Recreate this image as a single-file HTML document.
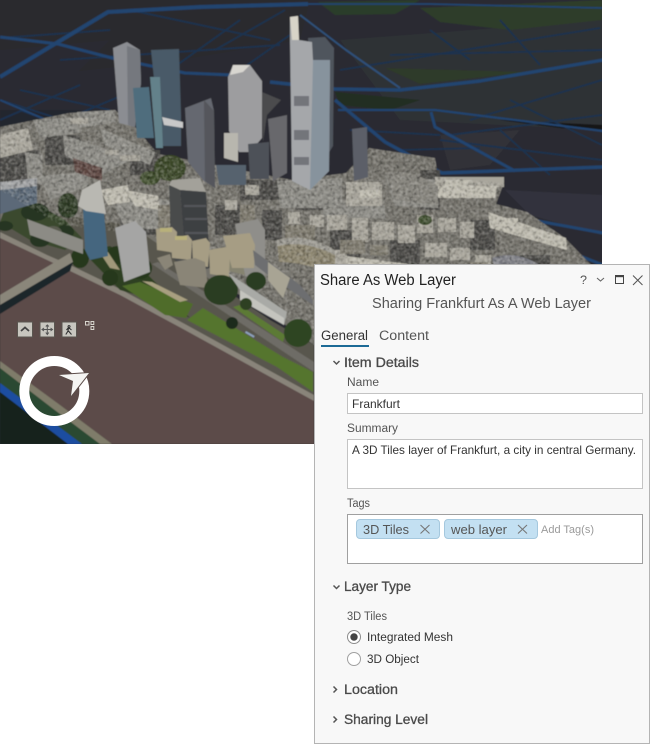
<!DOCTYPE html>
<html><head><meta charset="utf-8"><style>
html,body{margin:0;padding:0;background:#fff}
svg{display:block}
text{font-family:"Liberation Sans",sans-serif}
</style></head><body>
<svg width="650" height="744" viewBox="0 0 650 744" xmlns="http://www.w3.org/2000/svg">
<defs>
<clipPath id="c"><rect width="602" height="444"/></clipPath>
<filter id="b" x="-2%" y="-2%" width="104%" height="104%"><feGaussianBlur stdDeviation=".5"/></filter>
<filter id="n" x="0" y="0" width="100%" height="100%"><feTurbulence type="fractalNoise" baseFrequency=".3" numOctaves="2" seed="7"/><feColorMatrix type="matrix" values="0 0 0 0 0 0 0 0 0 0 0 0 0 0 0 .9 0 0 0 -.36" result="k"/><feTurbulence type="fractalNoise" baseFrequency=".34" numOctaves="2" seed="19"/><feColorMatrix type="matrix" values="0 0 0 0 .95 0 0 0 0 .93 0 0 0 0 .88 .7 0 0 0 -.3" result="w"/><feMerge result="t"><feMergeNode in="k"/><feMergeNode in="w"/></feMerge><feComposite in="t" in2="SourceAlpha" operator="in"/></filter>
</defs>
<g clip-path="url(#c)">
<g filter="url(#b)">
<rect x="-5" y="-5" width="612" height="454" fill="#2b2c32"/>
<polygon points="0,0 310,0 300,40 180,60 0,80" fill="#2c2b2e"/>
<polygon points="0,50 110,40 60,90 0,100" fill="#2a2a30"/>
<polygon points="340,40 602,20 602,130 400,120" fill="#2e3035"/>
<polygon points="318,2 420,0 395,14 335,15" fill="#2a3d2a"/>
<polygon points="420,8 602,0 602,20 510,30 440,22" fill="#2d3c2c"/>
<polygon points="385,68 530,72 420,84" fill="#2e3a2a"/>
<polygon points="335,92 420,100 390,110 340,105" fill="#222f20"/>
<polygon points="500,120 602,125 602,130 560,128" fill="#141614"/>
<polygon points="505,190 602,195 602,235 530,215" fill="#33333c"/>
<polygon points="440,135 520,130 490,165 450,170" fill="#303037"/>
<polygon points="0,110 100,110 100,130 0,170" fill="#24272f"/>
<g fill="none" stroke="#1e3350" stroke-width="1.800">
<path d="M0 38L110 30M60 60L280 45M130 10L270 40M20 90L110 110M0 120L80 85M0 100L110 135M40 130L140 88M20 110L60 125"/>
<path d="M170 70L240 20M215 50L285 10M240 70L290 35M340 70L600 28M390 55L602 50M470 60L430 30M540 65L500 20M602 80L470 120M350 130L440 135M450 135L602 115M510 100L602 145M500 130L550 175"/>
<path d="M440 140L602 160M400 150L480 148"/>
</g>
<g fill="none" stroke="#224470" stroke-width="3" stroke-linejoin="round">
<path d="M0 77L58 42L108 12L200 7L308 4" stroke-width="4"/>
<path d="M0 37L58 44L112 58L185 73L232 75"/>
<path d="M270 82L335 89L400 90L480 81L603 60" stroke-width="3.400"/>
<path d="M300 15L346 50L400 88" stroke-width="2" stroke="#2d5078"/>
<path d="M335 100L385 142L442 173L603 167" stroke-width="3.400"/>
<path d="M338 110L435 110L603 131" stroke-width="2.200"/>
<path d="M431 112L435 127L515 171" stroke-width="3"/>
<path d="M527 219L603 233"/>
<path d="M570 252L603 265"/>
<path d="M0 100L70 130" stroke-width="2"/>
<path d="M308 4H430L602 8" stroke-width="1.800"/>
</g>
<polygon points="0,127 69,113 115,110 135,127 158,154 215,165 292,180 346,173 369,148 435,158 438,177 504,183 496,204 527,212 565,238 603,277 603,330 314,345 250,300 130,240 60,225 0,225" fill="#73716a"/>
<polygon points="0,225 60,215 130,225 270,320 314,345 314,400 0,260" fill="#59574d"/>
<polygon points="0,235 47,258 68,268 120,293 183,327 314,400 314,444 105,444 0,368" fill="#5b4c49"/>
<polygon points="0,232 47,255 70,265 120,289 183,323 314,395 314,401 183,329 120,295 68,270 47,260 0,238" fill="#89847a"/>
<polygon points="0,361 60,405 112,444 0,444" fill="#7f7b6a"/>
<polygon points="0,368 52,408 100,444 0,444" fill="#2b4a30"/>
<polygon points="0,383 82,444 0,444" fill="#1d4ea0"/>
<polygon points="0,392 68,444 0,444" fill="#15241a"/>
<polygon points="7,203 30,200 65,220 82,238 65,250 30,240 0,222" fill="#3a4a2e"/>
<g fill="#263520"><ellipse cx="35" cy="212" rx="14" ry="9"/><ellipse cx="40" cy="240" rx="10" ry="7"/><ellipse cx="65" cy="232" rx="9" ry="7"/><ellipse cx="5" cy="226" rx="8" ry="5"/><ellipse cx="68" cy="208" rx="10" ry="10"/></g>
<ellipse cx="53" cy="233" rx="9" ry="7" fill="#5a5c50"/>
<polygon points="83,252 110,246 135,262 158,285 190,318 155,300 120,290" fill="#2e4021"/>
<g fill="#26371c"><ellipse cx="118" cy="255" rx="12" ry="9"/><ellipse cx="140" cy="268" rx="12" ry="11"/><ellipse cx="110" cy="278" rx="8" ry="8"/><ellipse cx="80" cy="258" rx="9" ry="10"/></g>
<polygon points="100,253 108,252 120,270 110,268" fill="#a0987a"/>
<polygon points="122,286 140,282 193,304 186,318 165,315" fill="#4f6c2c"/>
<polygon points="142,281 152,282 188,300 180,302" fill="#a89f80"/>
<polygon points="187,320 203,308 283,357 313,372 313,392 277,367" fill="#55742f"/>
<polygon points="233,307 240,305 285,335 283,342" fill="#5c7a34"/>
<polygon points="0,295 70,253 73,262 0,305" fill="#8a867a"/>
<polygon points="0,305 73,262 70,271 0,314" fill="#1f252b"/>
<polygon points="152,264 158,262 314,362 314,372" fill="#6e6c66"/>
<path fill="#4a4946" d="M0 150h40v40H0zM45 135h35v30H45zM130 150h30v25h-30zM240 180h50v20h-50zM295 190h45v20h-45zM345 185h35v15h-35zM420 170h20v40h-20zM120 205h40v30h-40zM215 205h25v30h-25zM262 210h20v30h-20zM330 230h30v30h-30zM390 240h30v30h-30zM470 220h25v30h-25zM520 255h30v30h-30zM170 185h10v50h-10z"/>
<path fill="#8c8b85" d="M33 120L77 117 80 133 40 138zM77 112L115 110 116 122 80 128zM63 135L110 150 130 148 135 158 100 175 65 155zM100 128L155 152 150 165 105 145zM25 152L42 155 43 185 28 182zM40 176L88 172 88 186 50 200zM27 219L83 240 83 254 30 235zM108 192L169 200 170 230 125 228zM277 181L342 178 342 208 280 208zM323 200L385 205 385 219 323 216zM385 175L438 180 438 208 395 206z"/>
<path fill="#a9a69c" d="M0 135L28 128 33 150 0 158zM70 118h18v6H70zM105 150h14v5H105zM120 155h20v6h-20zM346 182h36v24h-36zM435 177h69v10h-69zM327 215h20v15h-20zM352 218h16v24h-16zM372 222h22v18h-22zM398 225h17v18h-17zM225 200h12v10h-12zM245 185h14v10h-14zM288 212h12v12h-12zM310 215h14v12h-14zM417 215h16v18h-16zM438 218h18v14h-18zM460 222h14v16h-14zM425 243h22v14h-22zM450 248h20v12h-20zM475 255h16v14h-16zM417 269h29v23h-29zM335 250h12v16h-12zM350 258h14v6h-14z"/>
<path fill="#c0bdb1" d="M488 212L566 238 567 250 490 228zM435 186h62l-2 12h-58zM346 256L408 264 408 281 346 272zM100 190L128 185 130 202 108 205zM125 190L158 196 160 210 135 206zM360 190h20v8h-20zM445 180h25v6h-25zM500 218h18v6h-18zM416 275h28v8h-28z"/>
<path fill="#7e7a6e" d="M158 205h12v25h-12zM240 205h15v30h-15zM285 225h30v15h-30zM340 240h25v14h-25zM370 245h18v10h-18zM400 285h12v15h-12zM467 285L515 297 514 306 466 296zM430 296h30v15h-30zM470 262h18v16h-18z"/>
<path d="M277 240Q305 232 335 250V275Q305 262 279 262Z" fill="#8c856f"/>
<path d="M277 240Q305 232 335 250V255Q305 240 277 246Z" fill="#9c9a92"/>
<path d="M385 172Q415 170 438 186V205L395 200Z" fill="#85837c"/>
<path d="M492 258Q515 250 538 264V290L500 290Z" fill="#7e7f86"/>
<polygon points="519,272 585,284 585,298 522,292" fill="#9fa0a0"/>
<ellipse cx="552" cy="296" rx="18" ry="8" fill="#2f4423"/>
<ellipse cx="425" cy="220" rx="7" ry="5" fill="#3a4a2a"/>
<ellipse cx="412" cy="272" rx="6" ry="8" fill="#2f3f24"/>
<ellipse cx="170" cy="168" rx="16" ry="13" fill="#3a4727"/>
<ellipse cx="150" cy="178" rx="10" ry="7" fill="#3e4c2b"/>
<ellipse cx="68" cy="205" rx="10" ry="12" fill="#2d3b24"/>
<polygon points="0,188 37,184 37,203 0,214" fill="#5b6978"/>
<polygon points="0,182 37,178 37,186 0,190" fill="#a0a2a4"/>
<polygon points="73,158 102,168 102,181 75,172" fill="#5c4540"/>
<polygon points="0,127 69,113 115,110 135,127 158,154 215,165 292,180 346,173 369,148 435,158 438,177 504,183 496,204 527,212 565,238 603,277 603,330 314,345 250,290 150,235 60,225 0,190" fill="#000" filter="url(#n)"/>
<polygon points="113,48 127,42 140,50 141,83 135,127 119,123" fill="#8b8d92"/>
<polygon points="127,46 140,50 141,83 135,127 128,125" fill="#75787e"/>
<polygon points="151,50 179,49 181,115 181,146 161,146" fill="#4a5a67"/>
<polygon points="133,88 149,87 154,138 137,138" fill="#4f6d7d"/>
<polygon points="150,77 160,77 163,148 156,148" fill="#64818a"/>
<polygon points="162,117 183,122 183,128 164,125" fill="#c8c8c8"/>
<polygon points="228,77 233,65 250,65 262,81 262,138 250,152 239,152 229,131" fill="#9d9d9f"/>
<polygon points="233,65 250,65 243,72 230,75" fill="#d8d6d0"/>
<polygon points="262,92 281,100 267,115 263,142" fill="#4b4b4e"/>
<polygon points="268,119 287,115 287,173 273,181" fill="#68686c"/>
<polygon points="248,144 269,142 269,179 250,179" fill="#4e5158"/>
<polygon points="224,133 238,133 238,162 224,158" fill="#b8b6ae"/>
<polygon points="216,165 246,165 246,185 219,185" fill="#57626e"/>
<polygon points="185,108 211,98 214,111 215,188 204,181 188,162" fill="#65686f"/>
<polygon points="204,100 214,111 215,188 205,181" fill="#55565c"/>
<polygon points="308,38 325,37 334,48 333,146 318,170" fill="#50555d"/>
<polygon points="290,17 298,16 299,40 312,42 313,60 330,60 329,171 310,190 292,181 290,42" fill="#a5a7aa"/>
<polygon points="290,17 298,16 299,40 292,40" fill="#d8d4c8"/>
<polygon points="313,60 330,60 329,171 310,190" fill="#87939d"/>
<polygon points="352,129 367,127 368,177 354,181" fill="#5b5f68"/>
<g fill="#73757a"><rect x="294" y="96" width="15" height="10"/><rect x="294" y="130" width="15" height="10"/><rect x="294" y="157" width="15" height="8"/></g>
<polygon points="169,185 172,180 200,178 206,192 180,190" fill="#a3a19a"/>
<polygon points="169,185 180,190 187,270 172,258" fill="#4a4c4c"/>
<polygon points="180,190 206,192 210,268 187,273" fill="#3d3f42"/>
<g fill="#55575a"><rect x="184" y="205" width="22" height="2"/><rect x="185" y="218" width="22" height="2"/><rect x="185" y="232" width="23" height="2"/><rect x="186" y="246" width="23" height="2"/></g>
<polygon points="83,208 104,213 108,256 90,260 85,250" fill="#45667f"/>
<polygon points="78,206 82,190 100,180 106,214 86,211" fill="#b9b8b2"/>
<polygon points="115,228 135,221 146,232 150,272 124,282" fill="#a5a5a4"/>
<polygon points="235,224 258,219 265,230 265,281 245,276" fill="#8f8e8a"/>
<polygon points="215,250 240,250 245,275 225,270" fill="#85836f"/>
<g fill="#a69d84">
<polygon points="156,229 172,227 177,232 176,253 157,250"/><polygon points="171,238 188,235 192,240 191,260 172,258"/><polygon points="192,241 206,238 210,243 208,267 193,265"/><polygon points="209,250 226,247 230,252 229,277 210,274"/>
<polygon points="223,236 250,233 255,245 254,268 232,268"/>
</g>
<g fill="#8a8577"><polygon points="174,262 195,258 205,262 208,288 180,285"/><polygon points="157,258 170,254 173,265 165,270"/></g>
<g fill="#b8b07a"><rect x="160" y="228" width="12" height="4"/><rect x="175" y="236" width="12" height="4"/></g>
<polygon points="253,250 300,285 313,300 313,305 272,278 255,265" fill="#6d6e70"/>
<polygon points="268,262 290,278 283,298 268,280" fill="#a8a494"/>
<ellipse cx="221" cy="290" rx="17" ry="15" fill="#2a3c20"/>
<ellipse cx="256" cy="281" rx="10" ry="9" fill="#2b3d22"/>
<polygon points="228,273 287,312 284,325 240,290" fill="#a9aaa6"/>
<polygon points="240,290 284,318 284,325 240,300" fill="#c4c4be"/>
<ellipse cx="246" cy="304" rx="6" ry="6" fill="#2d3f22"/>
<ellipse cx="298" cy="333" rx="14" ry="14" fill="#2e4422"/>
<ellipse cx="232" cy="323" rx="6" ry="6" fill="#1f2c1c"/>
<rect x="246" y="331" width="10" height="2" fill="#8da1bd" transform="rotate(30 246 331)"/>
</g>
<g stroke="#5a5650" stroke-width="1" fill="#c8c6bf">
<rect x="17.500" y="322" width="15" height="15"/><rect x="40" y="322" width="14.500" height="15"/><rect x="62" y="322" width="14.500" height="15"/>
</g>
<path d="M21 331L25 327.500L29 331" fill="none" stroke="#444" stroke-width="1.800"/>
<path d="M47.300 325L47.300 334M42.500 329.500H52M45.800 326.500L47.300 325L48.800 326.500M45.800 332.500L47.300 334.500L48.800 332.500M44 328L42 329.500L44 331M50.500 328L52.500 329.500L50.500 331" fill="none" stroke="#555" stroke-width="1"/>
<path d="M69 325.500a1 1 0 1 0 .1 0M68.500 327.500L68 331L65.800 334.500M68.500 331L71.500 334.500M66.500 330L68.500 327.500L71.500 330" fill="none" stroke="#333" stroke-width="1.100"/>
<g fill="none" stroke="#d8d6ce" stroke-width="1"><rect x="85.500" y="321.500" width="3.500" height="3.500"/><rect x="91" y="321.500" width="2.800" height="3"/><rect x="91" y="326.500" width="2.800" height="3"/></g>
<circle cx="54.300" cy="391" r="30" fill="none" stroke="#fff" stroke-width="10"/>
<polygon points="59,375 89,373 71,396 73,381" fill="#5b4c49" stroke="#5b4c49" stroke-width="2"/>
<polygon points="59,375 89,373 71,396 73,381" fill="#f4f4f2"/>
</g>
<rect x="314.500" y="264.500" width="335" height="479" fill="#f8f8f8" stroke="#b4b4b4"/>
<text x="320" y="285" font-size="15.500" fill="#222" textLength="136" lengthAdjust="spacingAndGlyphs">Share As Web Layer</text>
<text x="580" y="284" font-size="12" fill="#555" textLength="7" lengthAdjust="spacingAndGlyphs">?</text>
<path d="M597 278L600.500 281L604 278" fill="none" stroke="#666" stroke-width="1.100"/>
<rect x="615.500" y="275.500" width="8" height="8" fill="none" stroke="#444"/><rect x="615" y="275" width="9" height="2.200" fill="#444"/>
<path d="M633 275.500L642.500 285M642.500 275.500L633 285" stroke="#555" stroke-width="1" fill="none"/>
<text x="372" y="308" font-size="14.500" fill="#555" textLength="219" lengthAdjust="spacingAndGlyphs">Sharing Frankfurt As A Web Layer</text>
<text x="321" y="340" font-size="13.500" fill="#333" textLength="47" lengthAdjust="spacingAndGlyphs">General</text>
<text x="379" y="340" font-size="13.500" fill="#555" textLength="50" lengthAdjust="spacingAndGlyphs">Content</text>
<rect x="321" y="345" width="48" height="2" fill="#1c6a96"/>
<path d="M333.500 361L336.500 364L339.500 361" fill="none" stroke="#555" stroke-width="1.500"/>
<text x="344" y="367" font-size="13.500" fill="#4a4a4a" stroke="#4a4a4a" stroke-width=".3" textLength="75" lengthAdjust="spacingAndGlyphs">Item Details</text>
<text x="347" y="386" font-size="11.500" fill="#555" textLength="32" lengthAdjust="spacingAndGlyphs">Name</text>
<rect x="347.500" y="393.500" width="295" height="20" fill="#fff" stroke="#c4c4c4"/>
<text x="352" y="408" font-size="12" fill="#333" textLength="48" lengthAdjust="spacingAndGlyphs">Frankfurt</text>
<text x="347" y="432" font-size="11.500" fill="#555" textLength="51" lengthAdjust="spacingAndGlyphs">Summary</text>
<rect x="347.500" y="439.500" width="295" height="49" fill="#fff" stroke="#c4c4c4"/>
<text x="352" y="454" font-size="12" fill="#333" textLength="284" lengthAdjust="spacingAndGlyphs">A 3D Tiles layer of Frankfurt, a city in central Germany.</text>
<text x="347" y="507" font-size="11.500" fill="#555" textLength="23" lengthAdjust="spacingAndGlyphs">Tags</text>
<rect x="347.500" y="514.500" width="295" height="49" fill="#fff" stroke="#a0a0a0"/>
<rect x="356.500" y="519.500" width="83" height="19" rx="3.500" fill="#c3e0f2" stroke="#a5c8de"/>
<rect x="444.500" y="519.500" width="93" height="19" rx="3.500" fill="#c3e0f2" stroke="#a5c8de"/>
<text x="363" y="534" font-size="12.500" fill="#555" textLength="46" lengthAdjust="spacingAndGlyphs">3D Tiles</text>
<text x="451" y="534" font-size="12.500" fill="#555" textLength="56" lengthAdjust="spacingAndGlyphs">web layer</text>
<path d="M420.500 525L429.500 533.500M429.500 525L420.500 533.500M518 525L527 533.500M527 525L518 533.500" stroke="#777" stroke-width="1.100" fill="none"/>
<text x="541" y="533" font-size="11" fill="#9a9a9a" textLength="53" lengthAdjust="spacingAndGlyphs">Add Tag(s)</text>
<path d="M333.500 585.500L336.500 588.500L339.500 585.500" fill="none" stroke="#555" stroke-width="1.500"/>
<text x="344" y="591" font-size="13.500" fill="#4a4a4a" stroke="#4a4a4a" stroke-width=".3" textLength="67" lengthAdjust="spacingAndGlyphs">Layer Type</text>
<text x="347" y="620" font-size="11.500" fill="#555" textLength="40" lengthAdjust="spacingAndGlyphs">3D Tiles</text>
<circle cx="354" cy="637" r="6.500" fill="#fff" stroke="#8c8c8c"/><circle cx="354" cy="637" r="3.700" fill="#444"/>
<text x="367" y="641" font-size="11.500" fill="#333" textLength="86" lengthAdjust="spacingAndGlyphs">Integrated Mesh</text>
<circle cx="354" cy="659" r="6.500" fill="#fff" stroke="#a0a0a0"/>
<text x="367" y="663" font-size="11.500" fill="#333" textLength="52" lengthAdjust="spacingAndGlyphs">3D Object</text>
<path d="M333.500 686.500L336.500 689.500L333.500 692.500" fill="none" stroke="#555" stroke-width="1.500"/>
<text x="344" y="694" font-size="13.500" fill="#4a4a4a" stroke="#4a4a4a" stroke-width=".3" textLength="54" lengthAdjust="spacingAndGlyphs">Location</text>
<path d="M333.500 716.500L336.500 719.500L333.500 722.500" fill="none" stroke="#555" stroke-width="1.500"/>
<text x="344" y="724" font-size="13.500" fill="#4a4a4a" stroke="#4a4a4a" stroke-width=".3" textLength="84" lengthAdjust="spacingAndGlyphs">Sharing Level</text>
</svg>
</body></html>
